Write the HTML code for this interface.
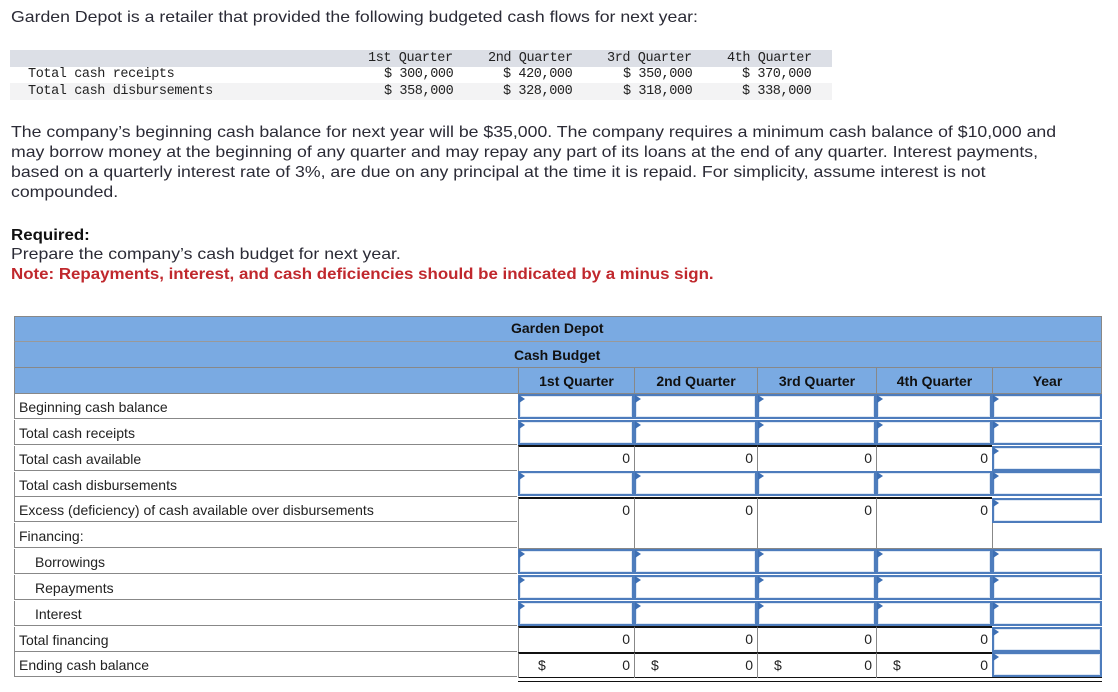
<!DOCTYPE html>
<html><head><meta charset="utf-8"><style>
body{margin:0;width:1118px;height:692px;background:#fff;font-family:"Liberation Sans",sans-serif;color:#2b2b36;position:relative;overflow:hidden}
.a{position:absolute}
.t{font-size:16px;line-height:20px;left:11px;white-space:nowrap;transform:scaleX(1.105);transform-origin:0 0}
.b{transform:scaleX(1.055)}
.m{font-family:"Liberation Mono",monospace;font-size:13.5px;line-height:17px;position:absolute;white-space:pre;color:#222;letter-spacing:-0.4px}
.lb{position:absolute;left:14px;width:503px;height:25px;border-bottom:1px solid #888;font-size:14px;line-height:26px;color:#222;box-sizing:border-box;padding-left:4px;border-left:1px solid #888}
.in{position:absolute;height:25px;box-sizing:border-box;border:2px solid #4d7cbc;background:#fff;box-shadow:inset 0 0 0 1px #dfe8f4}
.in:before{content:"";position:absolute;left:-1px;top:-1px;border-left:6px solid #3d6fb4;border-top:4px solid transparent;border-bottom:4px solid transparent}
.cv{position:absolute;height:26px;box-sizing:border-box;border-left:1px solid #888;border-top:2px solid #111;font-size:14px;line-height:23px;text-align:right;padding-right:4px;color:#222}
.hd{position:absolute;background:#7aaae2;font-size:14px;font-weight:bold;color:#111;box-sizing:border-box}
</style></head><body>
<div class="a t" style="top:8px">Garden Depot is a retailer that provided the following budgeted cash flows for next year:</div>
<div class="a" style="left:10px;top:50px;width:822px;height:17px;background:#dcdfe6"></div>
<div class="a" style="left:10px;top:83px;width:822px;height:17px;background:#f3f3f4"></div>
<div class="m" style="left:368px;top:50px">1st Quarter</div>
<div class="m" style="left:488px;top:50px">2nd Quarter</div>
<div class="m" style="left:607px;top:50px">3rd Quarter</div>
<div class="m" style="left:727px;top:50px">4th Quarter</div>
<div class="m" style="left:28px;top:66px">Total cash receipts</div>
<div class="m" style="left:28px;top:83px">Total cash disbursements</div>
<div class="m" style="left:384px;top:66px">$ 300,000</div><div class="m" style="left:503px;top:66px">$ 420,000</div><div class="m" style="left:623px;top:66px">$ 350,000</div><div class="m" style="left:742px;top:66px">$ 370,000</div>
<div class="m" style="left:384px;top:83px">$ 358,000</div><div class="m" style="left:503px;top:83px">$ 328,000</div><div class="m" style="left:623px;top:83px">$ 318,000</div><div class="m" style="left:742px;top:83px">$ 338,000</div>
<div class="a t" style="top:123px">The company’s beginning cash balance for next year will be $35,000. The company requires a minimum cash balance of $10,000 and</div>
<div class="a t" style="top:143px">may borrow money at the beginning of any quarter and may repay any part of its loans at the end of any quarter. Interest payments,</div>
<div class="a t" style="top:163px">based on a quarterly interest rate of 3%, are due on any principal at the time it is repaid. For simplicity, assume interest is not</div>
<div class="a t" style="top:183px">compounded.</div>
<div class="a t b" style="top:226px;font-weight:bold;color:#111">Required:</div>
<div class="a t" style="top:245px">Prepare the company’s cash budget for next year.</div>
<div class="a t b" style="top:265px;font-weight:bold;color:#c0282d">Note: Repayments, interest, and cash deficiencies should be indicated by a minus sign.</div>

<div class="hd" style="left:14px;top:316px;width:1088px;height:26px;border:1px solid #888;padding:3px 0 0 496px">Garden Depot</div>
<div class="hd" style="left:14px;top:341px;width:1088px;height:27px;border:1px solid #888;border-top:1px solid #999;padding:5px 0 0 499px">Cash Budget</div>
<div class="hd" style="left:14px;top:367px;width:1088px;height:27px;border:1px solid #888"></div>
<div class="hd" style="left:518px;top:367px;width:116px;height:27px;border-left:1px solid #888;text-align:center;padding-top:6px;background:none">1st Quarter</div>
<div class="hd" style="left:634px;top:367px;width:123px;height:27px;border-left:1px solid #888;text-align:center;padding-top:6px;background:none">2nd Quarter</div>
<div class="hd" style="left:757px;top:367px;width:119px;height:27px;border-left:1px solid #888;text-align:center;padding-top:6px;background:none">3rd Quarter</div>
<div class="hd" style="left:876px;top:367px;width:116px;height:27px;border-left:1px solid #888;text-align:center;padding-top:6px;background:none">4th Quarter</div>
<div class="hd" style="left:992px;top:367px;width:110px;height:27px;border-left:1px solid #888;text-align:center;padding-top:6px;background:none">Year</div>

<div class="lb" style="top:394px">Beginning cash balance</div>
<div class="lb" style="top:420px">Total cash receipts</div>
<div class="lb" style="top:446px">Total cash available</div>
<div class="lb" style="top:472px">Total cash disbursements</div>
<div class="lb" style="top:497px">Excess (deficiency) of cash available over disbursements</div>
<div class="lb" style="top:523px">Financing:</div>
<div class="lb" style="top:549px;padding-left:20px">Borrowings</div>
<div class="lb" style="top:575px;padding-left:20px">Repayments</div>
<div class="lb" style="top:601px;padding-left:20px">Interest</div>
<div class="lb" style="top:627px">Total financing</div>
<div class="lb" style="top:652px">Ending cash balance</div>
<div class="a" style="left:518px;top:523px;width:584px;height:26px;border-left:1px solid #888;border-bottom:1px solid #888;box-sizing:border-box"></div>
<div class="a" style="left:634px;top:523px;width:1px;height:26px;background:#888"></div>
<div class="a" style="left:757px;top:523px;width:1px;height:26px;background:#888"></div>
<div class="a" style="left:876px;top:523px;width:1px;height:26px;background:#888"></div>
<div class="a" style="left:992px;top:523px;width:1px;height:26px;background:#888"></div>
<div class="a" style="left:518px;top:677px;width:584px;height:3px;border-top:1px solid #111;border-bottom:1px solid #111"></div>

<div class="in" style="left:518px;top:394px;width:116px"></div><div class="in" style="left:634px;top:394px;width:123px"></div><div class="in" style="left:757px;top:394px;width:119px"></div><div class="in" style="left:876px;top:394px;width:116px"></div><div class="in" style="left:992px;top:394px;width:110px"></div>
<div class="in" style="left:518px;top:420px;width:116px"></div><div class="in" style="left:634px;top:420px;width:123px"></div><div class="in" style="left:757px;top:420px;width:119px"></div><div class="in" style="left:876px;top:420px;width:116px"></div><div class="in" style="left:992px;top:420px;width:110px"></div>
<div class="in" style="left:518px;top:471px;width:116px"></div><div class="in" style="left:634px;top:471px;width:123px"></div><div class="in" style="left:757px;top:471px;width:119px"></div><div class="in" style="left:876px;top:471px;width:116px"></div><div class="in" style="left:992px;top:471px;width:110px"></div>
<div class="in" style="left:518px;top:549px;width:116px"></div><div class="in" style="left:634px;top:549px;width:123px"></div><div class="in" style="left:757px;top:549px;width:119px"></div><div class="in" style="left:876px;top:549px;width:116px"></div><div class="in" style="left:992px;top:549px;width:110px"></div>
<div class="in" style="left:518px;top:575px;width:116px"></div><div class="in" style="left:634px;top:575px;width:123px"></div><div class="in" style="left:757px;top:575px;width:119px"></div><div class="in" style="left:876px;top:575px;width:116px"></div><div class="in" style="left:992px;top:575px;width:110px"></div>
<div class="in" style="left:518px;top:601px;width:116px"></div><div class="in" style="left:634px;top:601px;width:123px"></div><div class="in" style="left:757px;top:601px;width:119px"></div><div class="in" style="left:876px;top:601px;width:116px"></div><div class="in" style="left:992px;top:601px;width:110px"></div>

<div class="cv" style="left:518px;top:445px;width:116px">0</div><div class="cv" style="left:634px;top:445px;width:123px">0</div><div class="cv" style="left:757px;top:445px;width:119px">0</div><div class="cv" style="left:876px;top:445px;width:116px">0</div><div class="in" style="left:992px;top:446px;width:110px"></div>
<div class="cv" style="left:518px;top:497px;width:116px">0</div><div class="cv" style="left:634px;top:497px;width:123px">0</div><div class="cv" style="left:757px;top:497px;width:119px">0</div><div class="cv" style="left:876px;top:497px;width:116px">0</div><div class="in" style="left:992px;top:498px;width:110px"></div>
<div class="cv" style="left:518px;top:626px;width:116px">0</div><div class="cv" style="left:634px;top:626px;width:123px">0</div><div class="cv" style="left:757px;top:626px;width:119px">0</div><div class="cv" style="left:876px;top:626px;width:116px">0</div><div class="in" style="left:992px;top:627px;width:110px"></div>
<div class="cv" style="left:518px;top:652px;width:116px">0<span class="a" style="left:19px;top:0">$</span></div><div class="cv" style="left:634px;top:652px;width:123px">0<span class="a" style="left:16px;top:0">$</span></div><div class="cv" style="left:757px;top:652px;width:119px">0<span class="a" style="left:16px;top:0">$</span></div><div class="cv" style="left:876px;top:652px;width:116px">0<span class="a" style="left:16px;top:0">$</span></div><div class="in" style="left:992px;top:652px;width:110px"></div>
</body></html>
